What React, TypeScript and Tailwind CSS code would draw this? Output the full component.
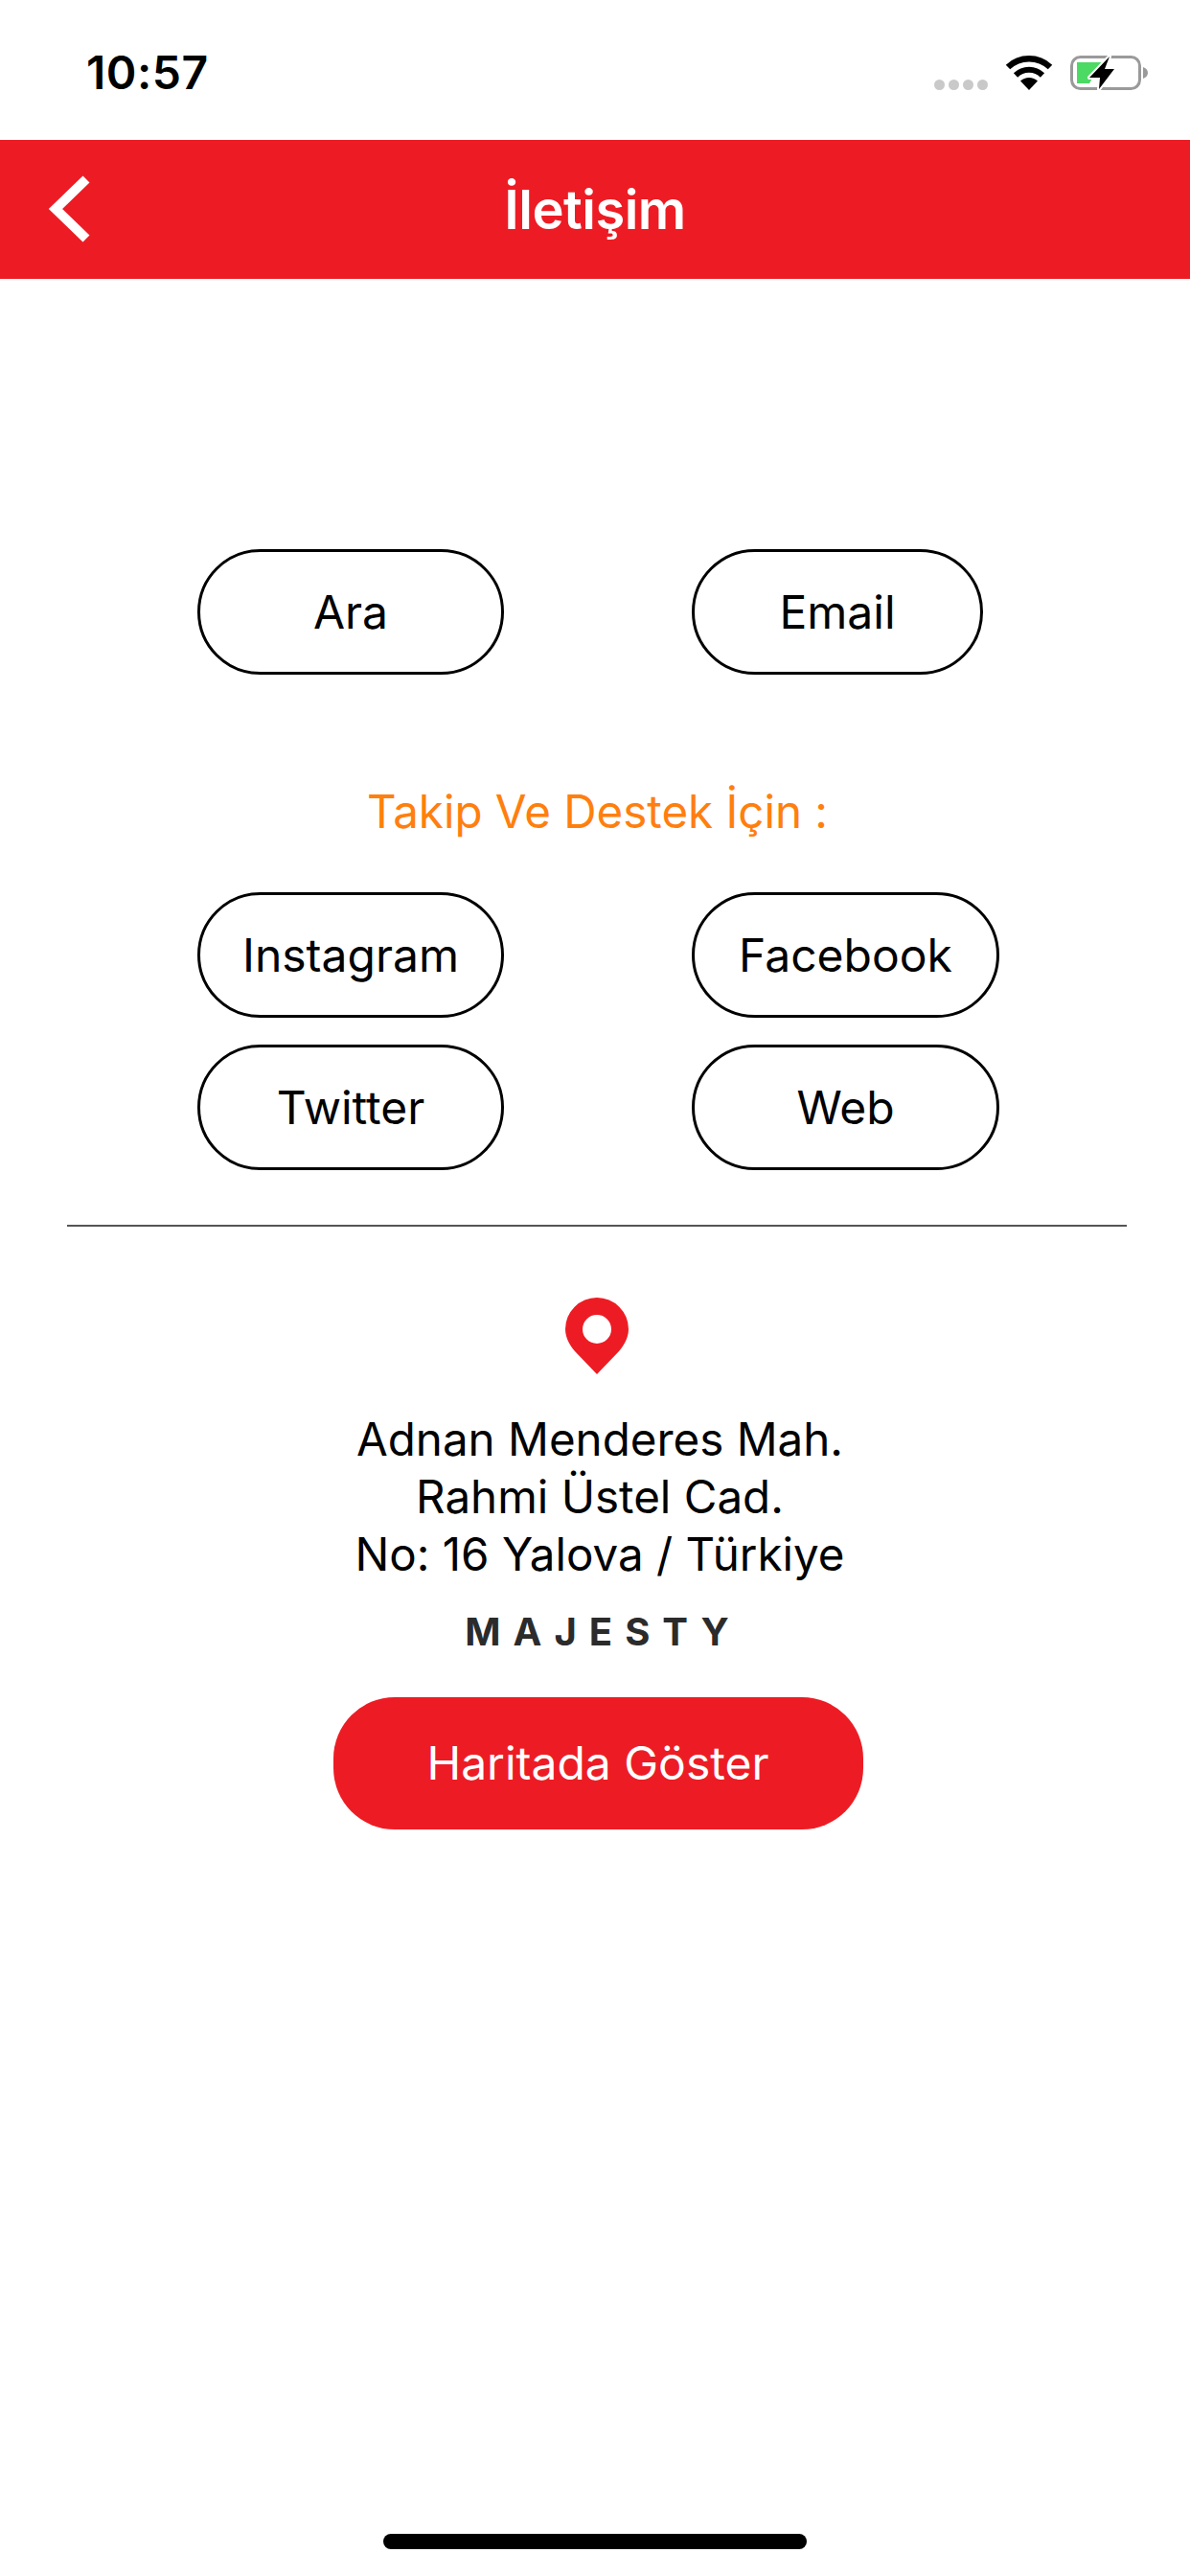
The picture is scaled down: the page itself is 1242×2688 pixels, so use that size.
const font = "font-['Inter','Liberation_Sans',sans-serif]";

const OutlineButton = ({ label, width }: { label: string; width: string }) => {
  return (
    <button className={`${width} h-[131px] rounded-[66px] border-[3px] border-black bg-white text-[48px] leading-none text-black`}>
      {label}
    </button>
  );
};

const StatusBar = () => {
  return (
    <div className="h-[146px] flex items-start justify-between pl-[90px] pr-[44px] pt-[52px]">
      <span className="text-[48px] leading-[48px] font-semibold tracking-[0.5px] text-black">10:57</span>
      <div className="flex items-start pt-[5px]">
        <div className="flex gap-[4px] mt-[26px] mr-[18px]">
          <div className="w-[11px] h-[11px] rounded-full bg-[#c9c9c9]"></div>
          <div className="w-[11px] h-[11px] rounded-full bg-[#c9c9c9]"></div>
          <div className="w-[11px] h-[11px] rounded-full bg-[#c9c9c9]"></div>
          <div className="w-[11px] h-[11px] rounded-full bg-[#c9c9c9]"></div>
        </div>
        <svg width="50" height="37" viewBox="0 0 50 37" className="mr-[18px]">
          <path d="M25 37 L16 27.5 A13 13 0 0 1 34 27.5 Z" fill="#000" />
          <path d="M11 21.5 A20 20 0 0 1 39 21.5" fill="none" stroke="#000" strokeWidth="6" />
          <path d="M3 13 A32 32 0 0 1 47 13" fill="none" stroke="#000" strokeWidth="6.5" />
        </svg>
        <svg width="81" height="38" viewBox="0 0 81 38">
          <rect x="1.5" y="2.5" width="71" height="33" rx="9" fill="none" stroke="#9a9a9a" strokeWidth="3" />
          <path d="M7 8 H33 L20 30 H7 Z" fill="#4cd964" />
          <path d="M76 13 C79 14 81 16 81 19 C81 22 79 24 76 25 Z" fill="#9a9a9a" />
          <path d="M41 2 L20 24 H31 L30 36 L46 15 H36 Z" fill="#000" stroke="#fff" strokeWidth="4" strokeLinejoin="round" paintOrder="stroke" />
        </svg>
      </div>
    </div>
  );
};

const App = () => {
  return (
    <div className={`${font} w-[1242px] h-[2688px] bg-white flex flex-col`}>
      <StatusBar />

      <header className="h-[145px] bg-[#ed1c24] flex items-center justify-center relative">
        <svg width="48" height="70" viewBox="0 0 48 70" className="absolute left-[50px] top-[37px]">
          <path d="M40 4 L8 35 L40 66" fill="none" stroke="#fff" strokeWidth="10" />
        </svg>
        <h1 className="text-[56px] leading-none font-semibold tracking-[-0.5px] text-white">İletişim</h1>
      </header>

      <main className="flex flex-col items-center">
        <div className="w-full pl-[206px] pt-[282px] flex gap-[196px]">
          <OutlineButton label="Ara" width="w-[320px]" />
          <OutlineButton label="Email" width="w-[304px]" />
        </div>

        <p className="mt-[113px] ml-[5px] text-[47.5px] leading-[60px] text-[#ff7f0e]">Takip Ve Destek İçin :</p>

        <div className="w-full pl-[206px] mt-[54px] grid grid-cols-[320px_321px] gap-x-[196px] gap-y-[28px]">
          <OutlineButton label="Instagram" width="w-full" />
          <OutlineButton label="Facebook" width="w-full" />
          <OutlineButton label="Twitter" width="w-full" />
          <OutlineButton label="Web" width="w-full" />
        </div>

        <div className="w-[1106px] h-[2px] bg-[#555555] mt-[57px] ml-[4px]"></div>

        <svg width="66" height="80" viewBox="0 0 66 80" className="mt-[74px] ml-[3px]">
          <path
            fillRule="evenodd"
            d="M33 0 A33 33 0 0 1 66 33 C66 42 61 50 56 56 L33 80 L10 56 C5 50 0 42 0 33 A33 33 0 0 1 33 0 Z M33 18 A15 15 0 1 0 33 48 A15 15 0 1 0 33 18 Z"
            fill="#ed1c24"
          />
        </svg>

        <address className="mt-[38px] ml-[10px] not-italic text-center text-[47.5px] leading-[60px] text-black">
          Adnan Menderes Mah.
          <br />
          Rahmi Üstel Cad.
          <br />
          No: 16 Yalova / Türkiye
        </address>

        <div className="mt-[31px] ml-[4px] text-[40px] leading-[40px] font-bold tracking-[13px] pl-[13px] text-[#2b2b2b]">MAJESTY</div>

        <button className="mt-[48px] ml-[6px] w-[553px] h-[138px] rounded-[64px] bg-[#ed1c24] text-[48px] leading-none text-white">
          Haritada Göster
        </button>
      </main>

      <div className="mt-auto pb-[28px] flex justify-center">
        <div className="w-[442px] h-[16px] rounded-full bg-black"></div>
      </div>
    </div>
  );
};

export default App;
